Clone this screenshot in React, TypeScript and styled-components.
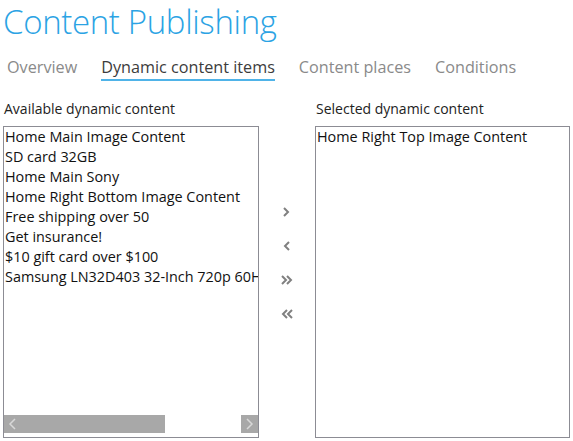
import React from "react";
import styled, { createGlobalStyle } from "styled-components";

const Global = createGlobalStyle`
  html, body { margin: 0; padding: 0; background: #ffffff; }
  body { font-family: "Open Sans", "Noto Sans", sans-serif; color: #222; }
`;

const Page = styled.div`
  width: 573px;
  height: 441px;
  overflow: hidden;
  display: flex;
  flex-direction: column;
`;

const Title = styled.h1`
  margin: 0;
  padding: 0 0 0 3px;
  height: 48px;
  font-weight: 300;
  font-size: 33px;
  line-height: 43px;
  color: #2ba3e4;
  letter-spacing: -0.35px;
  white-space: nowrap;
`;

const Tabs = styled.nav`
  display: flex;
  gap: 24px;
  padding-left: 7px;
  height: 35px;
`;

const Tab = styled.div<{ $active?: boolean }>`
  font-size: 16.2px;
  line-height: 22px;
  padding-top: 8px;
  height: 33px;
  box-sizing: border-box;
  color: ${(p) => (p.$active ? "#3c3c3c" : "#8a8a8a")};
  border-bottom: 2px solid ${(p) => (p.$active ? "#4fb3e8" : "transparent")};
`;

const Body = styled.div`
  display: flex;
  padding: 16px 0 0 3px;
`;

const Column = styled.div<{ $w: number }>`
  width: ${(p) => p.$w}px;
  display: flex;
  flex-direction: column;
`;

const Label = styled.div`
  font-size: 14px;
  line-height: 20px;
  height: 27px;
  padding-left: 1px;
  color: #222;
`;

const ListBox = styled.div`
  height: 312px;
  box-sizing: border-box;
  border: 1px solid #8c8c94;
  display: flex;
  flex-direction: column;
  overflow: hidden;
  padding-bottom: 4px;
`;

const Items = styled.div`
  flex: 1;
  overflow: hidden;
`;

const Item = styled.div`
  font-size: 14.4px;
  line-height: 20px;
  padding-left: 1px;
  white-space: nowrap;
  color: #111;
`;

const HScroll = styled.div`
  height: 18px;
  display: flex;
  background: #ffffff;
`;

const ScrollBtn = styled.div`
  width: 17px;
  height: 18px;
  background: #a8a8a8;
  display: flex;
  align-items: center;
  justify-content: center;
`;

const Thumb = styled.div`
  width: 144px;
  height: 18px;
  background: #a8a8a8;
`;

const Track = styled.div`
  flex: 1;
`;

const Middle = styled.div`
  width: 56px;
  display: flex;
  flex-direction: column;
  align-items: center;
  padding-top: 105px;
  gap: 18px;
`;

const MoveBtn = styled.button`
  width: 16px;
  height: 16px;
  padding: 0;
  margin: 0;
  border: none;
  background: transparent;
  display: flex;
  align-items: center;
  justify-content: center;
  cursor: pointer;
`;

const Chevron = ({ dir, double }: { dir: "l" | "r"; double?: boolean }) => {
  const single = dir === "r" ? "M5 4 L9 8 L5 12" : "M10 4 L6 8 L10 12";
  const dbl =
    dir === "r"
      ? "M3 4 L7 8 L3 12 M8 4 L12 8 L8 12"
      : "M8 4 L4 8 L8 12 M13 4 L9 8 L13 12";
  return (
    <svg width="16" height="16" viewBox="0 0 16 16">
      <path d={double ? dbl : single} fill="none" stroke="#808080" strokeWidth="2" />
    </svg>
  );
};

const ScrollArrow = ({ dir }: { dir: "l" | "r" }) => (
  <svg width="11" height="12" viewBox="0 0 11 12">
    <path
      d={dir === "l" ? "M8 1 L3 6 L8 11" : "M3 1 L8 6 L3 11"}
      fill="none"
      stroke="#d8d8d8"
      strokeWidth="1.5"
    />
  </svg>
);

const available = [
  "Home Main Image Content",
  "SD card 32GB",
  "Home Main Sony",
  "Home Right Bottom Image Content",
  "Free shipping over 50",
  "Get insurance!",
  "$10 gift card over $100",
  "Samsung LN32D403 32-Inch 720p 60Hz LCD HDTV",
];

const selected = ["Home Right Top Image Content"];

export default function App() {
  return (
    <Page>
      <Global />
      <Title>Content Publishing</Title>
      <Tabs>
        <Tab>Overview</Tab>
        <Tab $active>Dynamic content items</Tab>
        <Tab>Content places</Tab>
        <Tab>Conditions</Tab>
      </Tabs>
      <Body>
        <Column $w={256}>
          <Label>Available dynamic content</Label>
          <ListBox>
            <Items>
              {available.map((t) => (
                <Item key={t}>{t}</Item>
              ))}
            </Items>
            <HScroll>
              <ScrollBtn>
                <ScrollArrow dir="l" />
              </ScrollBtn>
              <Thumb />
              <Track />
              <ScrollBtn>
                <ScrollArrow dir="r" />
              </ScrollBtn>
            </HScroll>
          </ListBox>
        </Column>
        <Middle>
          <MoveBtn aria-label="Add">
            <Chevron dir="r" />
          </MoveBtn>
          <MoveBtn aria-label="Remove">
            <Chevron dir="l" />
          </MoveBtn>
          <MoveBtn aria-label="Add all">
            <Chevron dir="r" double />
          </MoveBtn>
          <MoveBtn aria-label="Remove all">
            <Chevron dir="l" double />
          </MoveBtn>
        </Middle>
        <Column $w={255}>
          <Label>Selected dynamic content</Label>
          <ListBox>
            <Items>
              {selected.map((t) => (
                <Item key={t}>{t}</Item>
              ))}
            </Items>
          </ListBox>
        </Column>
      </Body>
    </Page>
  );
}
